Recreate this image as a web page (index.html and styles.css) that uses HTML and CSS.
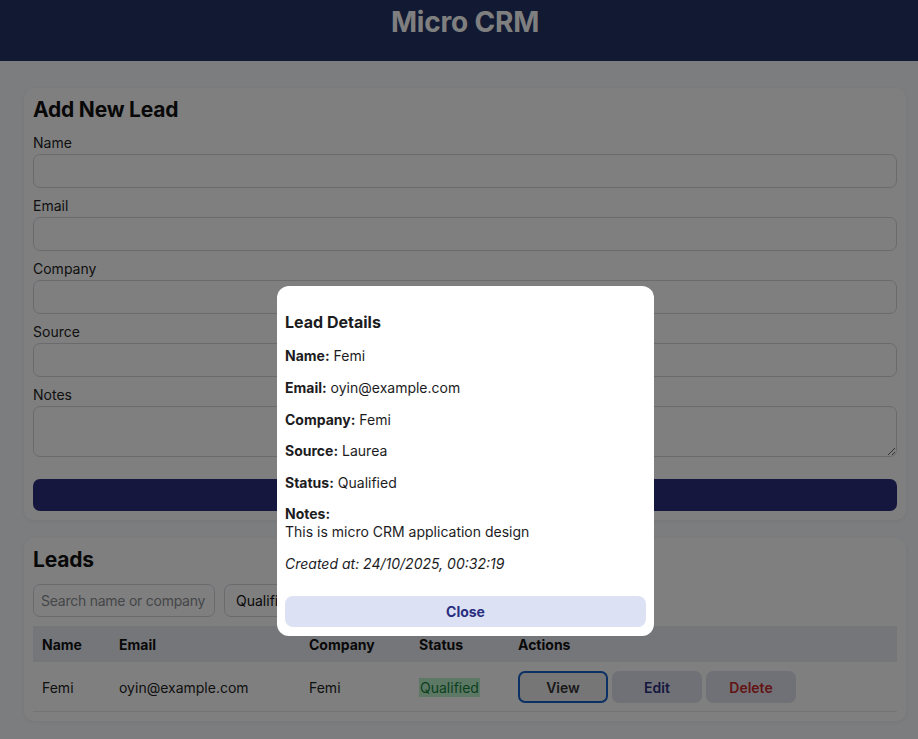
FILE: index.html
```html
<!DOCTYPE html>
<html lang="en">
<head>
<meta charset="utf-8">
<title>Micro CRM</title>
<link rel="stylesheet" href="styles.css">
</head>
<body>
<header class="topbar">
  <h1 class="brand">Micro CRM</h1>
</header>
<main class="page">
  <section class="card">
    <h2 class="card-title">Add New Lead</h2>
    <form class="lead-form">
      <div class="group"><label class="field-label">Name</label><input class="field" type="text"></div>
      <div class="group"><label class="field-label">Email</label><input class="field" type="email"></div>
      <div class="group"><label class="field-label">Company</label><input class="field" type="text"></div>
      <div class="group"><label class="field-label">Source</label><input class="field" type="text"></div>
      <div class="group"><label class="field-label">Notes</label><textarea class="field field-area"></textarea></div>
      <button class="submit" type="button">Add Lead</button>
    </form>
  </section>
  <section class="card leads">
    <h2 class="card-title">Leads</h2>
    <div class="filters">
      <input class="search" type="text" placeholder="Search name or company">
      <select class="filter"><option>Qualified</option></select>
    </div>
    <table class="leads-table">
      <colgroup>
        <col class="c-name"><col class="c-email"><col class="c-company"><col class="c-status"><col>
      </colgroup>
      <thead>
        <tr><th>Name</th><th>Email</th><th>Company</th><th>Status</th><th>Actions</th></tr>
      </thead>
      <tbody>
        <tr>
          <td>Femi</td>
          <td>oyin@example.com</td>
          <td>Femi</td>
          <td><span class="badge">Qualified</span></td>
          <td>
            <div class="actions">
              <button class="act act-view" type="button">View</button>
              <button class="act act-edit" type="button">Edit</button>
              <button class="act act-delete" type="button">Delete</button>
            </div>
          </td>
        </tr>
      </tbody>
    </table>
  </section>
</main>
<div class="overlay">
  <div class="modal">
    <h3 class="modal-title">Lead Details</h3>
    <p class="line"><strong>Name:</strong> Femi</p>
    <p class="line"><strong>Email:</strong> oyin@example.com</p>
    <p class="line"><strong>Company:</strong> Femi</p>
    <p class="line"><strong>Source:</strong> Laurea</p>
    <p class="line"><strong>Status:</strong> Qualified</p>
    <p class="line notes"><strong>Notes:</strong><br>This is micro CRM application design</p>
    <p class="line created"><em>Created at: 24/10/2025, 00:32:19</em></p>
    <button class="close" type="button">Close</button>
  </div>
</div>
</body>
</html>
```

FILE: styles.css
```css
* { box-sizing: border-box; }

html, body {
  margin: 0;
  padding: 0;
}

body {
  font-family: Inter, "Noto Sans", "Liberation Sans", sans-serif;
  font-size: 14px;
  color: #1c1c1e;
  background: #f8fafd;
  height: 739px;
  overflow: hidden;
}

.topbar {
  height: 61px;
  background: #223266;
  padding: 5px 0 0 12px;
  text-align: center;
}

.brand {
  margin: 0;
  color: #ffffff;
  font-size: 28px;
  line-height: 34px;
  font-weight: 700;
  letter-spacing: -0.2px;
}

.page {
  padding: 27px 12px 0 24px;
}

.card {
  background: #ffffff;
  border-radius: 10px;
  padding: 10px 9px 9px;
  box-shadow: 0 1px 4px rgba(0, 0, 0, 0.06);
}

.leads {
  margin-top: 18px;
}

.card-title {
  margin: 0 0 12px;
  font-size: 21px;
  line-height: 24px;
  font-weight: 700;
  color: #111;
  letter-spacing: -0.2px;
}

.group {
  margin-bottom: 9px;
}

.field-label {
  display: block;
  font-size: 14px;
  line-height: 17px;
  margin-bottom: 3px;
  color: #222;
}

.field {
  display: block;
  width: 100%;
  height: 34px;
  border: 1px solid #d3d7df;
  border-radius: 7px;
  background: #fff;
  font: inherit;
  padding: 0 8px;
}

.field-area {
  height: 51px;
  resize: vertical;
}

.submit {
  display: block;
  width: 100%;
  height: 32px;
  margin-top: 22px;
  border: none;
  border-radius: 7px;
  background: #2a2e7e;
  color: #fff;
  font: inherit;
  font-weight: 700;
}

.filters {
  display: flex;
  gap: 9px;
}

.search {
  width: 182px;
  height: 33px;
  border: 1px solid #d3d7df;
  border-radius: 7px;
  padding: 0 7px;
  font: inherit;
  letter-spacing: -0.25px;
  color: #222;
  background: #fff;
}

.search::placeholder {
  color: #8a8d94;
}

.filter {
  height: 33px;
  width: 150px;
  border: 1px solid #d3d7df;
  border-radius: 7px;
  padding: 0 11px;
  font: inherit;
  color: #111;
  background: #fff;
  appearance: none;
}

.leads-table {
  width: 100%;
  margin-top: 9px;
  border-collapse: collapse;
  table-layout: fixed;
}

.c-name { width: 77px; }
.c-email { width: 190px; }
.c-company { width: 110px; }
.c-status { width: 99px; }

.leads-table th {
  height: 36px;
  padding: 0 9px;
  text-align: left;
  background: #eaedf5;
  font-weight: 700;
  color: #111;
}

.leads-table td {
  padding: 9px 9px 8px;
  border-bottom: 1px solid #e6e8ec;
  color: #222;
  white-space: nowrap;
}

.badge {
  background: #bbf0cb;
  color: #15803d;
  padding: 1px 1px;
}

.actions {
  display: flex;
  gap: 4px;
}

.act {
  width: 90px;
  height: 32px;
  border: none;
  border-radius: 7px;
  background: #e1e3ec;
  font: inherit;
  font-weight: 600;
}

.act-view {
  border: 2px solid #1660c8;
  background: #ececef;
  color: #333;
}

.act-edit { color: #2a2e80; }
.act-delete { color: #c62828; }

.overlay {
  position: fixed;
  inset: 0;
  background: rgba(0, 0, 0, 0.5);
}

.modal {
  position: absolute;
  left: 277px;
  top: 286px;
  width: 377px;
  background: #fff;
  border-radius: 12px;
  padding: 9px 8px 9px;
  color: #1c1c1e;
}

.modal-title {
  margin: 17px 0 15px;
  font-size: 16px;
  line-height: 20px;
  font-weight: 700;
}

.line {
  margin: 14px 0;
  line-height: 17.75px;
}

.modal-title + .line {
  margin-top: 0;
}

.notes {
  margin-top: -1px;
  line-height: 18px;
}

.created {
  margin-bottom: 23px;
}

.close {
  display: block;
  width: 100%;
  height: 31px;
  border: none;
  border-radius: 8px;
  background: #dde1f4;
  color: #2a2e80;
  font: inherit;
  font-weight: 700;
}
```
